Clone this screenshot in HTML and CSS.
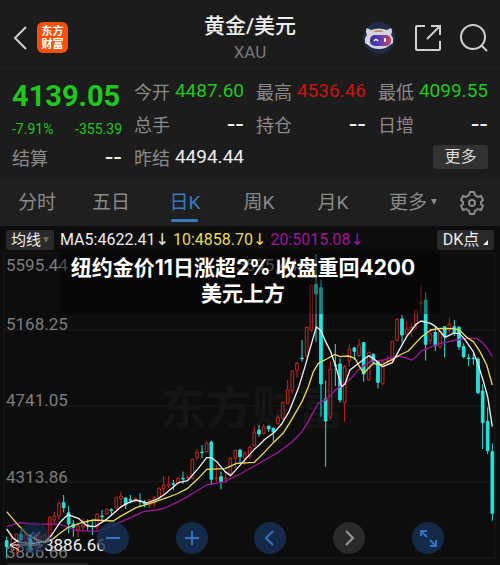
FILE: index.html
```html
<!DOCTYPE html>
<html lang="zh-CN">

<head>
  <meta charset="UTF-8">
  <meta name="viewport" content="width=device-width, initial-scale=1.0">
  <title>黄金/美元 XAU</title>
  <link rel="stylesheet" href="styles.css">
</head>

<body>
  <header class="header">
    <div class="header-left">
      <button class="icon-button" aria-label="返回">
        <svg width="16" height="26" viewBox="0 0 16 26"><path d="M14 2 3 13l11 11" /></svg>
      </button>
      <a class="logo" href="#"><span>东方</span><span>财富</span></a>
    </div>
    <div class="header-title">
      <h1>黄金/美元</h1>
      <p>XAU</p>
    </div>
    <div class="header-right">
      <button class="icon-button" aria-label="智能助手">
        <svg class="robot" width="34" height="34" viewBox="0 0 34 34">
          <defs>
            <linearGradient id="visor">
              <stop offset="0" stop-color="#3a2f9c" />
              <stop offset="0.5" stop-color="#5a3fb4" />
              <stop offset="1" stop-color="#d8405c" />
            </linearGradient>
          </defs>
          <circle cx="17" cy="17" r="16" fill="#202c48" />
          <path d="M5 7 9 9Q17 6 25 9L29 7Q31 10 29 14L31 17V22L28 24Q24 28 17 28T6 24L3 22V17L5 14Q3 10 5 7Z" fill="#d5d3dc" />
          <path d="M12 10Q17 8 21 10V11H12Z" fill="#b98d72" />
          <rect x="8" y="14" width="21" height="11" rx="5" fill="url(#visor)" />
          <path d="M12 20q2-3 4 0" fill="none" stroke="#fff" stroke-width="1.5" />
          <rect x="22" y="17" width="2" height="4" rx="1" fill="#fff" />
        </svg>
      </button>
      <button class="icon-button" aria-label="分享">
        <svg width="28" height="28" viewBox="0 0 28 28">
          <path d="M11 2H3Q2 2 2 3V25Q2 26 3 26H25Q26 26 26 25V17M17 2h9v9M26 2 13 15" />
        </svg>
      </button>
      <button class="icon-button" aria-label="搜索">
        <svg width="28" height="28" viewBox="0 0 28 28"><circle cx="13" cy="13" r="12" /><path d="m21 21 6 6" /></svg>
      </button>
    </div>
  </header>

  <section class="quote">
    <div class="price">
      <strong>4139.05</strong>
      <p><span>-7.91%</span><span>-355.39</span></p>
    </div>
    <div class="cell"><span>今开</span><b class="down">4487.60</b></div>
    <div class="cell"><span>最高</span><b class="up">4536.46</b></div>
    <div class="cell"><span>最低</span><b class="down">4099.55</b></div>
    <div class="cell"><span>总手</span><b class="empty">--</b></div>
    <div class="cell"><span>持仓</span><b class="empty">--</b></div>
    <div class="cell"><span>日增</span><b class="empty">--</b></div>
    <div class="cell"><span>结算</span><b class="empty">--</b></div>
    <div class="cell"><span>昨结</span><b>4494.44</b></div>
    <button class="more-button">更多</button>
  </section>

  <nav class="tabs">
    <a href="#">分时</a>
    <a href="#">五日</a>
    <a href="#" class="active">日K</a>
    <a href="#">周K</a>
    <a href="#">月K</a>
    <a href="#">更多<i class="caret"></i></a>
    <button class="icon-button settings" aria-label="设置">
      <svg width="24" height="24" viewBox="0 0 24 24">
        <path d="M9 4 10 1H14L15 4 18 6 21 5 23 9 21 11V13L23 15 21 19 18 18 15 20 14 23H10L9 20 6 18 3 19 1 15 3 13V11L1 9 3 5 6 6Z" />
        <circle cx="12" cy="12" r="3" />
      </svg>
    </button>
  </nav>

  <div class="averages">
    <button class="tag">均线<i class="caret"></i></button>
    <span class="ma5">MA5:4622.41<i>↓</i></span>
    <span class="ma10">10:4858.70<i>↓</i></span>
    <span class="ma20">20:5015.08<i>↓</i></span>
    <button class="tag dk">DK点<i class="corner"></i></button>
  </div>

  <main class="chart">
    <svg class="plot" viewBox="0 0 500 311">
      <path class="grid" d="M4 3H495V308H4ZM4 80H495M4 156H495M4 232H495" />
      <text class="watermark" x="160" y="174">东方财富</text>
      <g class="axis">
        <text x="6" y="21">5595.44</text>
        <text x="6" y="80">5168.25</text>
        <text x="6" y="156">4741.05</text>
        <text x="6" y="233">4313.86</text>
        <text x="6" y="308">3886.66</text>
        <text x="236" y="21">5595.44</text>
      </g>
      <!-- the plot has three units to a pixel -->
      <svg width="500" height="311" viewBox="0 0 1500 933">
        <g id="candles"></g>
        <polyline class="line ma20" points="20,830 60,818 100,822 180,823 205,832 230,842 290,844 330,830 380,808 430,785 470,780 495,774 535,755 563,740 595,720 620,705 675,695 720,672 763,648 835,607 875,577 906,545 925,515 943,480 955,460 980,448 1006,420 1020,410 1048,390 1080,355 1110,335 1150,330 1190,318 1215,323 1235,330 1249,320 1263,303 1290,292 1320,280 1370,270 1400,265 1430,265 1450,280 1465,300 1477,320" />
        <polyline class="line ma10" points="20,785 50,820 80,852 110,868 135,878 155,870 180,850 205,832 245,818 280,810 340,813 360,800 408,773 450,760 495,745 530,732 563,715 595,685 620,658 675,656 710,640 763,637 795,605 820,578 849,550 870,517 906,455 925,410 940,365 955,340 980,327 1005,313 1020,320 1045,318 1065,325 1077,347 1091,370 1120,340 1145,345 1177,328 1205,312 1225,303 1263,262 1292,240 1320,235 1365,236 1380,242 1400,262 1420,275 1440,305 1460,345 1477,405" />
        <polyline class="line ma5" points="20,837 40,865 60,878 100,880 135,875 155,855 180,817 203,794 235,805 262,828 285,830 320,808 360,773 380,760 408,750 440,759 475,746 495,732 535,698 563,692 595,655 620,623 635,623 650,635 675,665 692,677 725,640 763,598 778,585 792,570 825,545 845,522 867,485 895,415 915,350 949,230 963,242 977,275 992,305 1006,345 1025,410 1035,402 1050,360 1080,337 1106,317 1120,325 1148,350 1177,338 1192,310 1220,260 1249,222 1263,213 1292,220 1310,232 1335,262 1360,250 1378,250 1392,265 1420,305 1435,345 1449,390 1463,440 1477,530" />
      </svg>
      <path class="pointer" d="M43 295H10l9-5M10 295l9 5" />
      <text class="low" x="44" y="301">3886.66</text>
    </svg>

    <div class="banner"><p>纽约金价11日涨超2% 收盘重回4200美元上方</p></div>

    <div class="controls">
      <button class="faint" aria-label="最左"><svg width="32" height="32" viewBox="0 0 32 32"><path d="m16 10-6 6 6 6M22 10l-6 6 6 6" /></svg></button>
      <button aria-label="缩小"><svg width="32" height="32" viewBox="0 0 32 32"><path d="M9 16h14" /></svg></button>
      <button aria-label="放大"><svg width="32" height="32" viewBox="0 0 32 32"><path d="M9 16h14M16 9v14" /></svg></button>
      <button aria-label="左移"><svg width="32" height="32" viewBox="0 0 32 32"><path d="m19 9-7 7 7 7" /></svg></button>
      <button class="disabled" aria-label="右移"><svg width="32" height="32" viewBox="0 0 32 32"><path d="m13 9 7 7-7 7" /></svg></button>
      <button aria-label="全屏"><svg width="32" height="32" viewBox="0 0 32 32"><path d="m15 15-6-6M9 14V9h6M18 18l6 6M24 18v6h-6" /></svg></button>
    </div>
  </main>
  <div class="sub-panel"></div>

  <script src="chart.js"></script>
</body>

</html>
```
FILE: styles.css
```css
* {
  box-sizing: border-box;
}

body {
  margin: 0;
  background-color: #0d0d0d;
  color: #eee;
  font-family: Roboto, "Noto Sans CJK SC", sans-serif;
}

h1,
p {
  margin: 0;
  font-weight: normal;
}

i {
  font-style: normal;
}

a {
  color: inherit;
  text-decoration: none;
}

button {
  padding: 0;
  border: none;
  background: none;
  color: inherit;
  font-family: inherit;
  cursor: pointer;
}

svg {
  display: block;
}

.icon-button svg {
  fill: none;
  stroke: #d0d0d0;
  stroke-width: 2;
}

.icon-button .robot {
  stroke: none;
}

/* Header */
.header {
  display: grid;
  grid-template-columns: 1fr auto 1fr;
  align-items: center;
  height: 69px;
  padding: 8px 12px 0;
  background-color: #1c1c1c;
  border-bottom: 2px solid #202020;
}

.header-left,
.header-right {
  display: flex;
  align-items: center;
}

.header-left {
  gap: 9px;
}

.header-right {
  gap: 18px;
  justify-content: flex-end;
}

.logo {
  display: flex;
  flex-direction: column;
  align-items: center;
  justify-content: center;
  width: 31px;
  height: 31px;
  border-radius: 6px;
  background-color: #f4500c;
  color: #fff;
  font-size: 11px;
  font-weight: bold;
  line-height: 13px;
}

.header-title {
  text-align: center;
}

.header-title h1 {
  font-size: 21px;
  line-height: 28px;
  font-weight: 500;
}

.header-title p {
  color: #777;
  font-size: 17px;
  line-height: 24px;
}

/* Quote */
.quote {
  display: grid;
  grid-template-columns: repeat(4, minmax(0, 1fr));
  grid-auto-rows: 33px;
  column-gap: 12px;
  padding: 5px 12px 7px;
  background-color: #1c1c1c;
}

.price {
  grid-row: span 2;
  color: #1ec81e;
}

.price strong {
  display: block;
  font-size: 29px;
  font-weight: bold;
  line-height: 45px;
}

.price p {
  display: flex;
  justify-content: space-between;
  font-size: 14px;
  line-height: 20px;
}

.cell {
  display: flex;
  align-items: center;
  justify-content: space-between;
  color: #8a8a8a;
  font-size: 18px;
}

.cell b {
  color: #eee;
  font-size: 19px;
  font-weight: normal;
}

.cell .down {
  color: #1ec81e;
}

.cell .up {
  color: #c81414;
}

.cell .empty {
  font-family: "DejaVu Sans", sans-serif;
  font-size: 24px;
  line-height: 24px;
}

.more-button {
  grid-column: 4;
  align-self: center;
  justify-self: end;
  width: 55px;
  height: 24px;
  border-radius: 3px;
  background-color: #323232;
  color: #ddd;
  font-size: 16px;
  line-height: 24px;
}

/* Tabs */
.tabs {
  display: grid;
  grid-template-columns: repeat(5, 1fr) 86px 44px;
  height: 46px;
  background-color: #1f1f1f;
  color: #8a8a8a;
  font-size: 19px;
  line-height: 46px;
  text-align: center;
}

.tabs .active {
  position: relative;
  color: #3a78c2;
}

.active::after {
  content: "";
  position: absolute;
  bottom: 4px;
  left: 50%;
  width: 27px;
  height: 3px;
  margin-left: -14px;
  border-radius: 2px;
  background-color: #3a78c2;
}

.caret {
  display: inline-block;
  margin-left: 4px;
  border: 3px solid transparent;
  border-top: 6px solid #8a8a8a;
  border-bottom: none;
  vertical-align: 4px;
}

.settings {
  padding-left: 4px;
}

.settings svg {
  stroke: #8a8a8a;
}

/* Moving averages */
.averages {
  display: flex;
  align-items: center;
  gap: 4px;
  height: 24px;
  padding: 4px 6px 0;
  font-size: 16px;
  line-height: 20px;
  white-space: nowrap;
}

.averages span i {
  font-family: "DejaVu Sans", sans-serif;
}

.averages .ma5 {
  padding-left: 2px;
}

.ma10 {
  color: #e8dc50;
  stroke: #e8dc50;
}

.ma20 {
  color: #a0149c;
  stroke: #a0149c;
}

.ma5 {
  stroke: #f0f0f0;
}

.tag {
  width: 48px;
  height: 20px;
  border-radius: 3px;
  background-color: #2a2a2a;
  font-size: 15px;
  line-height: 20px;
}

.tag .caret {
  margin-left: 2px;
  border-top-color: #666;
  vertical-align: 2px;
}

.dk {
  width: 57px;
  margin-left: auto;
  font-size: 16px;
}

.corner {
  display: inline-block;
  margin-left: 4px;
  border-left: 5px solid transparent;
  border-bottom: 5px solid #eee;
}

/* Chart */
.chart {
  position: relative;
}

.plot {
  width: 100%;
  height: auto;
}

.grid {
  fill: none;
  stroke: #1b1b1b;
}

.watermark {
  fill: #151515;
  font-size: 46px;
  font-weight: bold;
}

.axis {
  fill: #7c7c7c;
  font-size: 17px;
}

.low {
  fill: #eee;
  font-size: 17px;
}

.pointer {
  fill: none;
  stroke: #eee;
  stroke-width: 1;
}

.line {
  fill: none;
  stroke-width: 4;
  stroke-linejoin: round;
}

.rise {
  fill: #0d0d0d;
  stroke: #c8221e;
  stroke-width: 3;
}

.fall {
  fill: #20e4e0;
  stroke: #20e4e0;
  stroke-width: 3;
}

.banner {
  position: absolute;
  top: 1px;
  left: 12%;
  right: 12%;
  height: 63px;
  padding: 4px 15px 0 1px;
  background-color: rgba(0, 0, 0, 0.4);
  color: #fff;
  font-family: Inter, "Noto Sans CJK SC", sans-serif;
  font-size: 21px;
  line-height: 26px;
  text-align: center;
}

.banner p {
  font-weight: bold;
}

.controls {
  position: absolute;
  bottom: 7px;
  left: 18px;
  right: 56px;
  display: flex;
  justify-content: space-between;
}

.controls button {
  width: 32px;
  height: 32px;
  border-radius: 50%;
  background-color: rgba(24, 50, 88, 0.8);
}

.controls svg {
  fill: none;
  stroke: #3472c0;
  stroke-width: 2;
}

.controls .faint {
  opacity: 0.7;
}

.controls .disabled {
  background-color: #2a2a2a;
}

.controls .disabled svg {
  stroke: #999;
}

.sub-panel {
  width: 83px;
  height: 2px;
  margin: 2px 0 0 6px;
  border-radius: 2px 2px 0 0;
  background-color: #262626;
}
```
FILE: chart.js
```js
// One row per day: rising (1) or falling (0), high, body top, body bottom, low
const days = [
  [0, 860, 872, 890, 925], [1, 852, 880, 885, 910], [1, 852, 852, 885, 910], [0, 840, 853, 870, 878],
  [1, 850, 855, 875, 890], [0, 855, 865, 900, 905], [1, 850, 855, 890, 895], [1, 855, 858, 875, 885],
  [1, 850, 855, 875, 880], [1, 800, 802, 868, 870], [1, 785, 798, 810, 822], [1, 752, 760, 798, 810],
  [0, 735, 758, 773, 787], [0, 767, 788, 822, 850], [0, 810, 822, 832, 860], [1, 820, 828, 840, 862],
  [1, 805, 825, 832, 840], [0, 808, 825, 827, 842], [0, 813, 828, 830, 855], [1, 790, 793, 830, 840],
  [0, 780, 798, 800, 810], [1, 775, 778, 792, 795], [0, 775, 779, 782, 798], [1, 740, 742, 775, 777],
  [1, 725, 738, 746, 770], [0, 742, 744, 764, 777], [0, 735, 749, 751, 760], [1, 742, 745, 755, 758],
  [0, 730, 752, 755, 770], [0, 750, 759, 762, 772], [1, 748, 750, 765, 775], [1, 738, 742, 760, 770],
  [1, 712, 715, 742, 745], [1, 678, 705, 717, 730], [1, 678, 702, 708, 715], [0, 690, 701, 703, 720],
  [1, 680, 685, 700, 702], [0, 665, 685, 687, 702], [1, 675, 682, 684, 692], [1, 625, 628, 685, 688],
  [1, 598, 607, 622, 630], [0, 585, 606, 608, 625], [1, 572, 580, 605, 610], [0, 572, 576, 688, 705],
  [1, 645, 684, 686, 695], [0, 665, 680, 695, 718], [1, 665, 684, 686, 700], [1, 622, 625, 670, 680],
  [1, 600, 601, 625, 655], [0, 598, 600, 620, 640], [1, 605, 610, 625, 645], [1, 588, 592, 620, 625],
  [1, 530, 547, 587, 590], [0, 525, 540, 552, 560], [1, 522, 530, 550, 553], [0, 527, 528, 537, 545],
  [0, 532, 535, 545, 575], [1, 495, 502, 520, 525], [1, 455, 457, 505, 510], [1, 390, 420, 460, 462],
  [1, 362, 363, 422, 430], [1, 335, 340, 362, 383], [0, 270, 324, 326, 335], [1, 230, 232, 318, 322],
  [1, 104, 106, 240, 245], [0, 12, 103, 132, 275], [0, 90, 113, 402, 500], [0, 392, 447, 513, 650],
  [1, 335, 358, 502, 507], [0, 282, 345, 347, 408], [0, 325, 342, 450, 458], [1, 345, 350, 458, 515],
  [1, 283, 297, 333, 350], [0, 290, 294, 304, 330], [1, 267, 285, 317, 320], [0, 276, 278, 372, 395],
  [1, 305, 307, 390, 392], [0, 310, 313, 337, 342], [0, 332, 335, 397, 415], [1, 330, 335, 400, 407],
  [1, 318, 332, 334, 345], [1, 272, 274, 332, 335], [1, 205, 208, 271, 274], [0, 195, 207, 255, 278],
  [1, 213, 237, 252, 258], [1, 220, 232, 240, 262], [1, 180, 181, 225, 240], [1, 106, 157, 161, 190],
  [0, 127, 150, 283, 332], [1, 235, 252, 272, 283], [0, 232, 247, 287, 303], [1, 240, 245, 290, 298],
  [0, 228, 230, 260, 322], [1, 203, 222, 240, 250], [0, 210, 230, 250, 258], [0, 228, 232, 290, 300],
  [0, 280, 290, 320, 325], [0, 312, 324, 326, 348], [0, 310, 324, 326, 345], [0, 322, 327, 428, 433],
  [0, 403, 423, 518, 597], [0, 472, 514, 602, 612], [0, 580, 605, 790, 812]
];

const first = 20;
const last = 1477;
const step = (last - first) / (days.length - 1);

document.getElementById('candles').innerHTML = days.map(([rising, high, top, bottom, low], i) => {
  const x = Math.round(first + i * step);
  return `<path class="${rising ? 'rise' : 'fall'}" d="M${x} ${high}V${top}M${x} ${bottom}V${low}M${x - 4} ${top}h8V${bottom}h-8Z" />`;
}).join('');
```
